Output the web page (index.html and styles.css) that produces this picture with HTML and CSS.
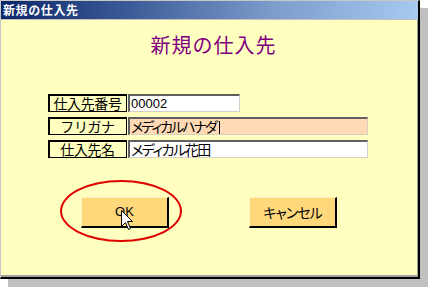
FILE: index.html
```html
<!DOCTYPE html>
<html lang="ja">
<head>
<meta charset="utf-8">
<link rel="stylesheet" href="styles.css">
</head>
<body>
<div class="window">
  <div class="titlebar">新規の仕入先</div>
  <div class="client">
    <h1 class="heading">新規の仕入先</h1>
    <div class="form">
      <div class="label">仕入先番号</div>
      <div class="field short">00002</div>
      <div class="label">フリガナ</div>
      <div class="field kana">メディカルハナダ<span class="caret"></span></div>
      <div class="label">仕入先名</div>
      <div class="field name">メディカル花田</div>
    </div>
    <div class="buttons">
      <div class="btn ok">OK</div>
      <div class="btn">キャンセル</div>
    </div>
  </div>
  <div class="ring"></div>
  <svg class="cursor" width="13" height="21" viewBox="0 0 13 21">
    <path d="M0.5 0.5 L0.5 16.5 L4.5 12.5 L7.5 19.5 L9.5 18.5 L6.5 11.5 L11.5 11.5 Z" fill="#fff" stroke="#000" stroke-width="1"/>
  </svg>
</div>
</body>
</html>
```

FILE: styles.css
```css
html, body {
  margin: 0;
  padding: 0;
  background: #ffffff;
}

body {
  width: 429px;
  height: 288px;
  overflow: hidden;
  font-family: "Noto Sans CJK JP", "Noto Sans", sans-serif;
}

.window {
  position: relative;
  width: 420px;
  height: 279px;
  box-sizing: border-box;
  border-top: 1px solid #c8c8c8;
  border-left: 1px solid #c8c8c8;
  border-right: 2px solid #000;
  border-bottom: 2px solid #000;
  box-shadow: 8px 8px 0 #c0c0c0;
  display: flex;
  flex-direction: column;
  background: #ffffc0;
}

.titlebar {
  height: 18px;
  flex: none;
  border-bottom: 1px solid #c0c0c0;
  background: linear-gradient(to right, #0c2668 0%, #3a5a96 30%, #7c9ccc 65%, #a6caf0 100%);
  color: #fff;
  font-weight: bold;
  font-size: 12px;
  line-height: 18px;
  letter-spacing: 0.6px;
  padding-left: 2px;
}

.client {
  flex: 1;
  box-shadow: inset -1px -2px 0 #a0a0a0;
  padding-top: 13px;
}

.heading {
  margin: 0;
  font-weight: normal;
  font-size: 20px;
  line-height: 24px;
  letter-spacing: 1px;
  color: #800080;
  text-align: center;
  padding-left: 8px;
}

.form {
  margin: 37px 0 0 47px;
  display: grid;
  grid-template-columns: 79px 240px;
  grid-auto-rows: 18px;
  row-gap: 5px;
  column-gap: 1px;
}

.label {
  box-sizing: border-box;
  border: 1px solid #000;
  box-shadow: inset 1px 1px 0 #000;
  font-size: 14px;
  line-height: 16px;
  text-align: center;
  color: #000;
  letter-spacing: -0.4px;
  white-space: nowrap;
}

.field {
  box-sizing: border-box;
  background: #fff;
  border-top: 2px solid #606060;
  border-left: 2px solid #606060;
  border-right: 1px solid #d4d0c8;
  border-bottom: 1px solid #d4d0c8;
  font-size: 14px;
  line-height: 15px;
  padding-left: 1px;
  font-feature-settings: "palt";
  color: #000;
  white-space: nowrap;
}

.field.short {
  width: 112px;
  font-family: "Liberation Sans", sans-serif;
  font-size: 13px;
}

.field.kana {
  background: #ffdab4;
  letter-spacing: -2px;
}

.field.name {
  letter-spacing: -1.5px;
}

.caret {
  display: inline-block;
  width: 1px;
  height: 13px;
  background: #000;
  vertical-align: -2px;
  margin-left: 3px;
}

.buttons {
  margin: 39px 0 0 80px;
  display: flex;
  gap: 80px;
}

.btn {
  width: 88px;
  height: 31px;
  box-sizing: border-box;
  background: #ffd87c;
  border-top: 1px solid #fff0c0;
  border-left: 1px solid #fff0c0;
  border-right: 2px solid #000;
  border-bottom: 2px solid #000;
  font-size: 14px;
  line-height: 28px;
  text-align: center;
  color: #000;
  font-feature-settings: "palt";
  letter-spacing: -1px;
}

.btn.ok {
  font-family: "Liberation Sans", sans-serif;
  font-size: 13px;
  letter-spacing: 0;
}

.ring {
  position: absolute;
  left: 59px;
  top: 179px;
  width: 122px;
  height: 62px;
  box-sizing: border-box;
  border: 2px solid #e00000;
  border-radius: 50%;
}

.cursor {
  position: absolute;
  left: 120px;
  top: 209px;
}
```
